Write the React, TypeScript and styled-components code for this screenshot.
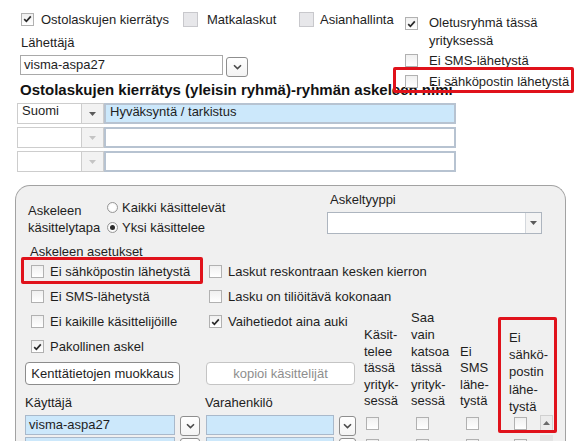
import React from 'react';
import styled, { createGlobalStyle, css } from 'styled-components';

const GlobalStyle = createGlobalStyle`
  html, body {
    margin: 0;
    padding: 0;
    overflow: hidden;
    background: #fff;
  }
  body {
    font-family: "Liberation Sans", Arial, sans-serif;
    font-size: 13px;
    line-height: 15px;
    color: #1e1e1e;
  }
  * { box-sizing: border-box; }
`;

const RED = '#e0121b';

const Page = styled.div`
  width: 577px;
  height: 441px;
  padding: 10px 0 0 15px;
  overflow: hidden;
`;

/* ---------- small controls ---------- */

const Box = styled.span<{ $muted?: boolean }>`
  flex: none;
  display: inline-flex;
  align-items: center;
  justify-content: center;
  width: ${p => (p.$muted ? 15 : 13)}px;
  height: ${p => (p.$muted ? 15 : 13)}px;
  border: 1px solid ${p => (p.$muted ? '#c8c8cc' : '#b1b1b1')};
  background: ${p => (p.$muted ? '#e7e7ea' : 'linear-gradient(#f0f0f0, #ffffff)')};
`;

const Check = ({ checked, muted }: { checked?: boolean; muted?: boolean }) => (
  <Box $muted={muted}>
    {checked && (
      <svg width="9" height="8" viewBox="0 0 9 8">
        <path d="M1.2 4.2 L3.4 6.3 L7.8 1.4" stroke="#2a2a2a" strokeWidth="1.7" fill="none" />
      </svg>
    )}
  </Box>
);

const RadioDot = styled.span<{ $on?: boolean }>`
  flex: none;
  width: 11px;
  height: 11px;
  border-radius: 50%;
  border: 1px solid #979797;
  background: radial-gradient(circle, #fff 40%, #ececec 100%);
  display: inline-flex;
  align-items: center;
  justify-content: center;
  &::after {
    content: '';
    display: ${p => (p.$on ? 'block' : 'none')};
    width: 5px;
    height: 5px;
    border-radius: 50%;
    background: #2b2b2b;
  }
`;

const ChevronButton = styled.span<{ $w?: number }>`
  flex: none;
  display: inline-flex;
  align-items: center;
  justify-content: center;
  width: ${p => p.$w ?? 21}px;
  height: 20px;
  border: 1px solid #8e8e8e;
  border-radius: 3px;
  background: linear-gradient(#ffffff, #f3f3f3);
`;

const Chevron = ({ w }: { w?: number }) => (
  <ChevronButton $w={w}>
    <svg width="9" height="6" viewBox="0 0 9 6">
      <path d="M1 1.2 L4.5 4.6 L8 1.2" stroke="#4a4a4a" strokeWidth="1.6" fill="none" />
    </svg>
  </ChevronButton>
);

const Tri = ({ color }: { color: string }) => (
  <svg width="7" height="4" viewBox="0 0 7 4">
    <path d="M0 0 H7 L3.5 4 Z" fill={color} />
  </svg>
);

/* ---------- top area ---------- */

const TopArea = styled.div`
  display: flex;
  align-items: flex-start;
  height: 71px;
`;

const SenderBlock = styled.div`
  width: 390px;
`;

const ModuleRow = styled.div`
  display: flex;
  align-items: center;
  height: 18px;
  padding-left: 6px;
`;

const Module = styled.label<{ $w: number; $gap: number }>`
  display: flex;
  align-items: center;
  gap: ${p => p.$gap}px;
  width: ${p => p.$w}px;
  white-space: nowrap;
`;

const FieldLabel = styled.div<{ $pad?: number }>`
  margin-top: 7px;
  padding-left: ${p => p.$pad ?? 6}px;
`;

const SenderRow = styled.div`
  display: flex;
  align-items: flex-start;
  margin: 5px 0 0 5px;
  gap: 3px;
  & > span:last-child { margin-top: 2px; }
`;

const TextBox = styled.div<{ $w: number; $blue?: boolean }>`
  width: ${p => p.$w}px;
  height: 20px;
  border: 1px solid ${p => (p.$blue ? '#a9b9cb' : '#a9a9a9')};
  background: ${p => (p.$blue ? '#cce8fb' : '#fff')};
  padding: 0 3px;
  line-height: 18px;
  white-space: nowrap;
  overflow: hidden;
`;

const DefaultsCol = styled.div`
  margin-top: 4px;
  width: 169px;
  display: flex;
  flex-direction: column;
`;

const SideOption = styled.label<{ $h: number; $top?: boolean; $mark?: boolean }>`
  position: relative;
  display: flex;
  align-items: ${p => (p.$top ? 'flex-start' : 'center')};
  gap: 11px;
  height: ${p => p.$h}px;
  line-height: ${p => (p.$top ? '18px' : '15px')};
  & > span:first-child { margin-top: ${p => (p.$top ? '3px' : '0')}; }
  ${p =>
    p.$mark &&
    css`
      &::after {
        content: '';
        position: absolute;
        top: -3px;
        bottom: -1px;
        left: -12px;
        right: 0;
        border: 3px solid ${RED};
        border-radius: 2px;
        z-index: 2;
        pointer-events: none;
      }
    `}
`;

const GroupTitle = styled.div`
  margin-left: 5px;
  font-size: 15px;
  font-weight: bold;
  line-height: 18px;
  color: #121212;
  white-space: nowrap;
`;

/* ---------- step name table ---------- */

const NameTable = styled.div`
  margin: 4px 0 0 2px;
  width: 439px;
  display: flex;
  flex-direction: column;
  gap: 3px;
`;

const NameRow = styled.div`
  display: flex;
  height: 21px;
`;

const LangCell = styled.div`
  width: 65px;
  border: 1px solid #cdcdcd;
  background: #fff;
  padding: 0 4px;
  line-height: 14px;
`;

const LangArrow = styled.div`
  width: 22px;
  border: 1px solid #cdcdcd;
  border-left: 0;
  background: #f2f2f2;
  display: flex;
  align-items: center;
  justify-content: center;
`;

const NameInput = styled.div<{ $active?: boolean }>`
  flex: 1;
  border: 2px solid #b7c3d1;
  background: ${p => (p.$active ? '#cce8fb' : '#fff')};
  padding: 0 4px;
  line-height: 14px;
`;

/* ---------- step panel ---------- */

const Panel = styled.div`
  margin-top: 13px;
  width: 551px;
  height: 280px;
  border: 1px solid #a2a2a2;
  border-bottom: 0;
  border-radius: 15px 15px 0 0;
  background: #f0f0f0;
  padding: 6px 0 0 9px;
`;

const StepTop = styled.div`
  display: flex;
  align-items: flex-start;
`;

const StepMode = styled.div`
  width: 79px;
  margin: 10px 0 0 3px;
  line-height: 17px;
`;

const RadioGroup = styled.div`
  width: 220px;
  margin-top: 5px;
`;

const RadioRow = styled.label`
  display: flex;
  align-items: center;
  gap: 4px;
  height: 20px;
  white-space: nowrap;
`;

const TypeField = styled.div`
  width: 215px;
`;

const TypeLabel = styled.div`
  padding-left: 3px;
`;

const Select = styled.div`
  margin-top: 5px;
  height: 22px;
  display: flex;
  border: 1px solid #adb5bf;
  background: #fff;
`;

const SelectArrow = styled.div`
  margin-left: auto;
  width: 16px;
  border-left: 1px solid #d4d8dd;
  background: #f4f4f4;
  display: flex;
  align-items: center;
  justify-content: center;
`;

const SectionTitle = styled.div`
  margin: 7px 0 0 5px;
`;

const OptionGrid = styled.div`
  display: grid;
  grid-template-columns: 178px 1fr;
  grid-auto-rows: 25px;
`;

const OptionItem = styled.label<{ $mark?: boolean; $col?: number; $row?: number }>`
  position: relative;
  display: flex;
  align-items: center;
  gap: 6px;
  padding-left: 6px;
  white-space: nowrap;
  ${p => p.$col && css`grid-column: ${p.$col};`}
  ${p => p.$row && css`grid-row: ${p.$row};`}
  ${p =>
    p.$mark &&
    css`
      &::after {
        content: '';
        position: absolute;
        top: -2px;
        bottom: 0;
        left: -4px;
        right: 0;
        border: 3px solid ${RED};
        border-radius: 2px;
        z-index: 2;
        pointer-events: none;
      }
    `}
`;

const LowerGrid = styled.div`
  display: grid;
  grid-template-columns: 178px 159px 48px 48px 48px 32px 18px;
  grid-template-rows: 25px 25px 26px 28px 22px 22px;
`;

const ActionButton = styled.div<{ $off?: boolean; $col: number; $w: number; $ml: number }>`
  grid-column: ${p => p.$col};
  grid-row: 3;
  align-self: end;
  margin-left: ${p => p.$ml}px;
  width: ${p => p.$w}px;
  height: 23px;
  border: 1px solid ${p => (p.$off ? '#c4c4c4' : '#8c8c8c')};
  border-radius: 4px;
  background: #fff;
  color: ${p => (p.$off ? '#8e8e8e' : '#1e1e1e')};
  text-align: center;
  line-height: 21px;
  white-space: nowrap;
`;

const UserLabel = styled.div<{ $col: number; $pad: number }>`
  grid-column: ${p => p.$col};
  grid-row: 4;
  align-self: end;
  margin-bottom: 3px;
  padding-left: ${p => p.$pad}px;
`;

const UserPick = styled.div<{ $col: number; $row: number; $ml: number }>`
  grid-column: ${p => p.$col};
  grid-row: ${p => p.$row};
  display: flex;
  align-items: flex-start;
  gap: 5px;
  margin: 2px 0 0 ${p => p.$ml}px;
  & > span { margin-top: 1px; }
`;

const ColumnHead = styled.div<{ $col: number; $x: number; $lh: number; $mb: number }>`
  grid-column: ${p => p.$col};
  grid-row: 1 / 5;
  align-self: end;
  padding-left: ${p => p.$x}px;
  margin-bottom: ${p => p.$mb}px;
  line-height: ${p => p.$lh}px;
  white-space: nowrap;
`;

const CellCheck = styled.div<{ $col: number; $row: number; $x: number }>`
  grid-column: ${p => p.$col};
  grid-row: ${p => p.$row};
  margin: 4px 0 0 ${p => p.$x}px;
  display: flex;
`;

const ScrollUp = styled.div`
  grid-column: 7;
  grid-row: 5;
  margin: 2px 0 0 2px;
  width: 13px;
  height: 16px;
  border: 1px solid #d0d0d0;
  background: #ececec;
  display: flex;
  align-items: center;
  justify-content: center;
`;

const ScrollTrack = styled.div`
  grid-column: 7;
  grid-row: 6;
  margin: 0 0 0 2px;
  width: 13px;
  background: #e4e4e4;
`;

const ColumnMark = styled.div`
  grid-column: 6 / 8;
  grid-row: 1 / 6;
  align-self: end;
  justify-self: start;
  margin: 0 0 2px -8px;
  width: 59px;
  height: 116px;
  border: 3px solid ${RED};
  border-radius: 2px;
  z-index: 2;
  pointer-events: none;
`;

type Column = { lines: string[]; hx: number; bx: number; lh: number; mb: number };

const columns: Column[] = [
  { lines: ['Käsit-', 'telee', 'tässä', 'yrityk-', 'sessä'], hx: 2, bx: 4, lh: 16.6, mb: 3 },
  { lines: ['Saa', 'vain', 'katsoa', 'tässä', 'yrityk-', 'sessä'], hx: 1, bx: 6, lh: 16.6, mb: 3 },
  { lines: ['Ei', 'SMS', 'lähe-', 'tystä'], hx: 2, bx: 8, lh: 16.6, mb: 3 },
  { lines: ['Ei', 'sähkö-', 'postin', 'lähe-', 'tystä'], hx: 3, bx: 8, lh: 17.2, mb: -2 },
];

const names = [
  { lang: 'Suomi', text: 'Hyväksyntä / tarkistus', active: true },
  { lang: '', text: '', active: false },
  { lang: '', text: '', active: false },
];

export default function App() {
  return (
    <>
      <GlobalStyle />
      <Page>
        <TopArea>
          <SenderBlock>
            <ModuleRow>
              <Module $w={162} $gap={7}>
                <Check checked />
                Ostolaskujen kierrätys
              </Module>
              <Module $w={116} $gap={9}>
                <Check muted />
                Matkalaskut
              </Module>
              <Module $w={106} $gap={6}>
                <Check muted />
                Asianhallinta
              </Module>
            </ModuleRow>
            <FieldLabel>Lähettäjä</FieldLabel>
            <SenderRow>
              <TextBox $w={203}>visma-aspa27</TextBox>
              <Chevron w={22} />
            </SenderRow>
          </SenderBlock>
          <DefaultsCol>
            <SideOption $h={36} $top>
              <Check checked />
              Oletusryhmä tässä yrityksessä
            </SideOption>
            <SideOption $h={20}>
              <Check />
              Ei SMS-lähetystä
            </SideOption>
            <SideOption $h={22} $mark>
              <Check />
              Ei sähköpostin lähetystä
            </SideOption>
          </DefaultsCol>
        </TopArea>

        <GroupTitle>Ostolaskujen kierrätys (yleisin ryhmä)-ryhmän askeleen nimi</GroupTitle>

        <NameTable>
          {names.map((n, i) => (
            <NameRow key={i}>
              <LangCell>{n.lang}</LangCell>
              <LangArrow>
                <Tri color={n.active ? '#5a5a5a' : '#c4c4c4'} />
              </LangArrow>
              <NameInput $active={n.active}>{n.text}</NameInput>
            </NameRow>
          ))}
        </NameTable>

        <Panel>
          <StepTop>
            <StepMode>
              Askeleen
              <br />
              käsittelytapa
            </StepMode>
            <RadioGroup>
              <RadioRow>
                <RadioDot />
                Kaikki käsittelevät
              </RadioRow>
              <RadioRow>
                <RadioDot $on />
                Yksi käsittelee
              </RadioRow>
            </RadioGroup>
            <TypeField>
              <TypeLabel>Askeltyyppi</TypeLabel>
              <Select>
                <SelectArrow>
                  <Tri color="#5a5a5a" />
                </SelectArrow>
              </Select>
            </TypeField>
          </StepTop>

          <SectionTitle>Askeleen asetukset</SectionTitle>
          <OptionGrid>
            <OptionItem $mark>
              <Check />
              Ei sähköpostin lähetystä
            </OptionItem>
            <OptionItem>
              <Check />
              Laskut reskontraan kesken kierron
            </OptionItem>
            <OptionItem>
              <Check />
              Ei SMS-lähetystä
            </OptionItem>
            <OptionItem>
              <Check />
              Lasku on tiliöitävä kokonaan
            </OptionItem>
          </OptionGrid>

          <LowerGrid>
            <OptionItem $col={1} $row={1}>
              <Check />
              Ei kaikille käsittelijöille
            </OptionItem>
            <OptionItem $col={2} $row={1}>
              <Check checked />
              Vaihetiedot aina auki
            </OptionItem>
            <OptionItem $col={1} $row={2}>
              <Check checked />
              Pakollinen askel
            </OptionItem>

            <ActionButton $col={1} $w={155} $ml={0}>
              Kenttätietojen muokkaus
            </ActionButton>
            <ActionButton $col={2} $w={149} $ml={3} $off>
              kopioi käsittelijät
            </ActionButton>

            <UserLabel $col={1} $pad={0}>Käyttäjä</UserLabel>
            <UserLabel $col={2} $pad={2}>Varahenkilö</UserLabel>

            <UserPick $col={1} $row={5} $ml={0}>
              <TextBox $w={150} $blue>visma-aspa27</TextBox>
              <Chevron w={20} />
            </UserPick>
            <UserPick $col={2} $row={5} $ml={3}>
              <TextBox $w={128} $blue />
              <Chevron w={17} />
            </UserPick>
            <UserPick $col={1} $row={6} $ml={0}>
              <TextBox $w={150} $blue />
              <Chevron w={20} />
            </UserPick>
            <UserPick $col={2} $row={6} $ml={3}>
              <TextBox $w={128} $blue />
              <Chevron w={17} />
            </UserPick>

            {columns.map((c, i) => (
              <ColumnHead key={'h' + i} $col={3 + i} $x={c.hx} $lh={c.lh} $mb={c.mb}>
                {c.lines.map((l, j) => (
                  <div key={j}>{l}</div>
                ))}
              </ColumnHead>
            ))}
            {columns.map((c, i) => (
              <React.Fragment key={'c' + i}>
                <CellCheck $col={3 + i} $row={5} $x={c.bx}>
                  <Check />
                </CellCheck>
                <CellCheck $col={3 + i} $row={6} $x={c.bx}>
                  <Check />
                </CellCheck>
              </React.Fragment>
            ))}

            <ScrollUp>
              <svg width="7" height="4" viewBox="0 0 7 4">
                <path d="M0 4 H7 L3.5 0 Z" fill="#6a6a6a" />
              </svg>
            </ScrollUp>
            <ScrollTrack />
            <ColumnMark />
          </LowerGrid>
        </Panel>
      </Page>
    </>
  );
}
